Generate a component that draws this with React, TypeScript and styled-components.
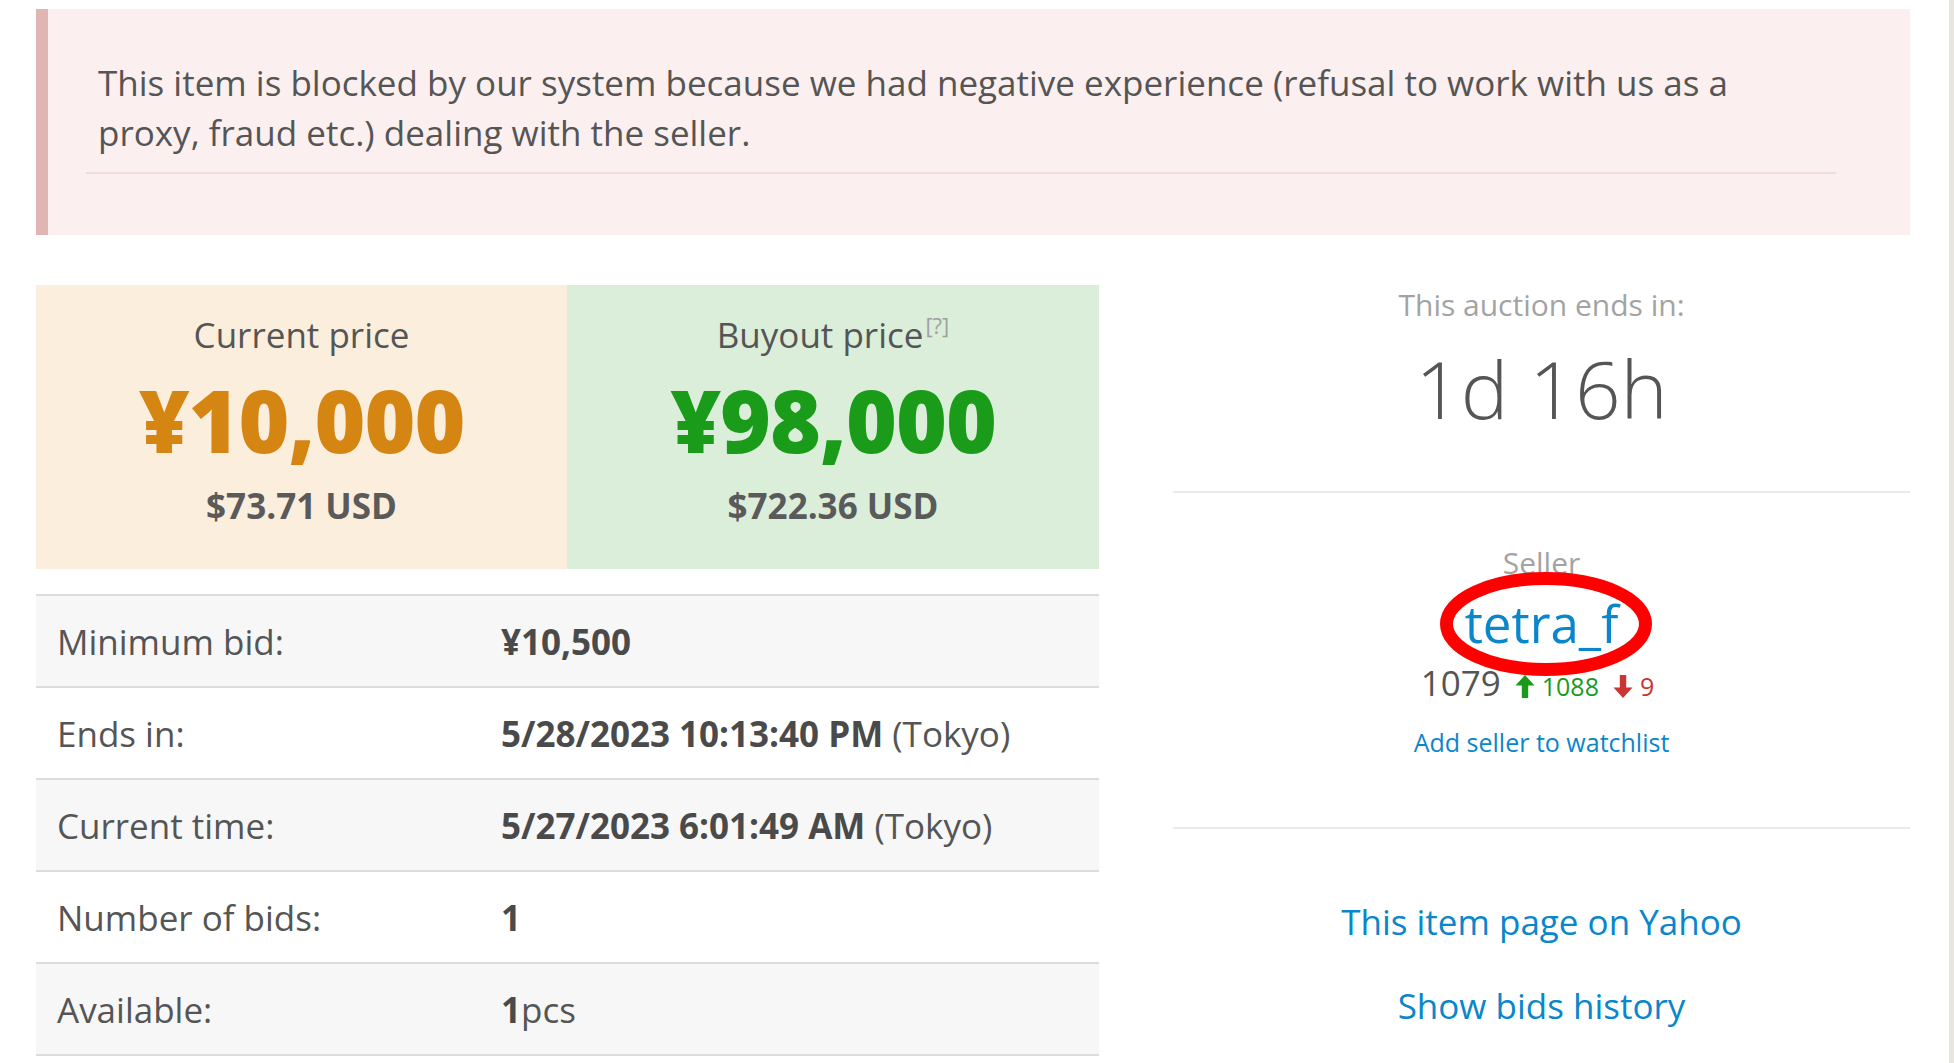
import React from "react";
import styled, { createGlobalStyle } from "styled-components";

const Global = createGlobalStyle`
  html, body { margin: 0; padding: 0; background: #fff; }
  body { font-family: "Open Sans", "Noto Sans", sans-serif; color: #555; }
  * { box-sizing: border-box; }
`;

const Page = styled.div`
  position: relative;
  width: 1954px;
  height: 1063px;
  overflow: hidden;
  padding: 9px 44px 0 36px;
`;

const EdgeStrip = styled.div`
  position: absolute;
  top: 0;
  right: 0;
  width: 5px;
  height: 100%;
  background: #e9e5df;
`;

const Alert = styled.div`
  height: 226px;
  background: #fbf0ef;
  border-left: 12px solid #dfb6b4;
  padding: 49px 74px 0 38px;
`;

const AlertText = styled.p`
  margin: 0 0 14px;
  padding-left: 12px;
  font-size: 35px;
  line-height: 50px;
  color: #555;
`;

const AlertRule = styled.div`
  height: 2px;
  background: #f0dcdc;
`;

const Main = styled.div`
  display: flex;
  gap: 74px;
  margin-top: 50px;
`;

const LeftCol = styled.div`
  width: 1063px;
  flex: none;
`;

const PriceRow = styled.div`
  display: grid;
  grid-template-columns: 531px 532px;
  height: 284px;
`;

const PriceBox = styled.div<{ $tone: "orange" | "green" }>`
  background: ${(p) => (p.$tone === "orange" ? "#fbeedc" : "#daeeda")};
  display: flex;
  flex-direction: column;
  align-items: center;
  padding-top: 28px;
`;

const PriceLabel = styled.div`
  font-size: 35px;
  line-height: 44px;
  color: #555;
`;

const Help = styled.sup`
  font-size: 22px;
  color: #a0a0a0;
  vertical-align: 14px;
  line-height: 0;
  margin-left: 2px;
`;

const BigPrice = styled.div<{ $tone: "orange" | "green" }>`
  font-size: 87px;
  font-weight: 800;
  line-height: 100px;
  margin-top: 12px;
  letter-spacing: -1px;
  color: ${(p) => (p.$tone === "orange" ? "#d58512" : "#1a9c1a")};
`;

const UsdPrice = styled.div`
  font-size: 35px;
  font-weight: 700;
  line-height: 44px;
  margin-top: 15px;
  color: #5a5a5a;
`;

const Table = styled.div`
  margin-top: 25px;
  border-top: 2px solid #dcdcdc;
`;

const Row = styled.div<{ $shade: boolean }>`
  display: grid;
  grid-template-columns: 444px 1fr;
  align-items: center;
  height: 92px;
  padding-left: 21px;
  background: ${(p) => (p.$shade ? "#f7f7f7" : "#fff")};
  border-bottom: 2px solid #dcdcdc;
  font-size: 35px;
  color: #555;
`;

const Strong = styled.b`
  font-weight: 700;
  color: #4a4a4a;
`;

const RightCol = styled.div`
  width: 737px;
  flex: none;
  display: flex;
  flex-direction: column;
  align-items: stretch;
  text-align: center;
`;

const Section = styled.div<{ $h: number; $pt: number }>`
  height: ${(p) => p.$h}px;
  padding-top: ${(p) => p.$pt}px;
  display: flex;
  flex-direction: column;
  align-items: center;
`;

const Rule = styled.div`
  height: 2px;
  background: #ebebeb;
`;

const EndsLabel = styled.div`
  font-size: 30px;
  line-height: 40px;
  color: #a3a3a3;
`;

const Countdown = styled.div`
  font-size: 80px;
  font-weight: 300;
  line-height: 100px;
  margin-top: 13px;
  color: #555;
`;

const SellerLabel = styled.div`
  font-size: 30px;
  line-height: 36px;
  color: #a3a3a3;
`;

const SellerWrap = styled.div`
  position: relative;
  margin-top: 11px;
`;

const SellerName = styled.a`
  font-size: 51px;
  line-height: 62px;
  color: #0a86cb;
  text-decoration: none;
`;

const Circle = styled.svg`
  position: absolute;
  left: calc(50% + 4px);
  top: calc(50% + 1px);
  width: 212px;
  height: 104px;
  transform: translate(-50%, -50%);
  overflow: visible;
  pointer-events: none;
`;

const Rating = styled.div`
  display: flex;
  align-items: baseline;
  gap: 6px;
  margin-top: 7px;
  line-height: 44px;
`;

const Score = styled.span`
  font-size: 35px;
  color: #555;
  margin-right: 8px;
`;

const Count = styled.span<{ $c: string }>`
  font-size: 25px;
  color: ${(p) => p.$c};
  margin-right: 8px;
  display: inline-flex;
  align-items: baseline;
  gap: 7px;
`;

const Watch = styled.a`
  margin-top: 17px;
  font-size: 25px;
  line-height: 34px;
  color: #0a86cb;
  text-decoration: none;
`;

const BigLink = styled.a`
  font-size: 35px;
  line-height: 46px;
  color: #0a86cb;
  text-decoration: none;
  & + & {
    margin-top: 38px;
  }
`;

const Arrow = ({ up, color }: { up: boolean; color: string }) => (
  <svg width="20" height="25" viewBox="0 0 20 25" style={{ alignSelf: "center" }}>
    {up ? (
      <path d="M10 1 L19.5 11.5 H13.2 V24 H6.8 V11.5 H0.5 Z" fill={color} />
    ) : (
      <path d="M10 24 L19.5 13.5 H13.2 V1 H6.8 V13.5 H0.5 Z" fill={color} />
    )}
  </svg>
);

const rows: { label: string; value: React.ReactNode }[] = [
  { label: "Minimum bid:", value: <Strong>¥10,500</Strong> },
  { label: "Ends in:", value: <><Strong>5/28/2023 10:13:40 PM</Strong> (Tokyo)</> },
  { label: "Current time:", value: <><Strong>5/27/2023 6:01:49 AM</Strong> (Tokyo)</> },
  { label: "Number of bids:", value: <Strong>1</Strong> },
  { label: "Available:", value: <><Strong>1</Strong>pcs</> },
];

export default function App() {
  return (
    <>
      <Global />
      <Page>
        <EdgeStrip />
        <Alert>
          <AlertText>
            This item is blocked by our system because we had negative experience (refusal to work with us as a
            proxy, fraud etc.) dealing with the seller.
          </AlertText>
          <AlertRule />
        </Alert>
        <Main>
          <LeftCol>
            <PriceRow>
              <PriceBox $tone="orange">
                <PriceLabel>Current price</PriceLabel>
                <BigPrice $tone="orange">¥10,000</BigPrice>
                <UsdPrice>$73.71 USD</UsdPrice>
              </PriceBox>
              <PriceBox $tone="green">
                <PriceLabel>
                  Buyout price<Help>[?]</Help>
                </PriceLabel>
                <BigPrice $tone="green">¥98,000</BigPrice>
                <UsdPrice>$722.36 USD</UsdPrice>
              </PriceBox>
            </PriceRow>
            <Table>
              {rows.map((r, i) => (
                <Row key={r.label} $shade={i % 2 === 0}>
                  <span>{r.label}</span>
                  <span>{r.value}</span>
                </Row>
              ))}
            </Table>
          </LeftCol>
          <RightCol>
            <Section $h={206} $pt={0}>
              <EndsLabel>This auction ends in:</EndsLabel>
              <Countdown>1d 16h</Countdown>
            </Section>
            <Rule />
            <Section $h={334} $pt={52}>
              <SellerLabel>Seller</SellerLabel>
              <SellerWrap>
                <SellerName href="#">tetra_f</SellerName>
                <Circle viewBox="0 0 212 104">
                  <ellipse cx="106" cy="52" rx="99.5" ry="45.5" fill="none" stroke="#ff0000" strokeWidth="13" />
                </Circle>
              </SellerWrap>
              <Rating>
                <Score>1079</Score>
                <Count $c="#1a9a1a">
                  <Arrow up color="#1a9a1a" />
                  1088
                </Count>
                <Count $c="#cc3333">
                  <Arrow up={false} color="#cc3333" />
                  9
                </Count>
              </Rating>
              <Watch href="#">Add seller to watchlist</Watch>
            </Section>
            <Rule />
            <Section $h={240} $pt={70}>
              <BigLink href="#">This item page on Yahoo</BigLink>
              <BigLink href="#">Show bids history</BigLink>
            </Section>
          </RightCol>
        </Main>
      </Page>
    </>
  );
}
